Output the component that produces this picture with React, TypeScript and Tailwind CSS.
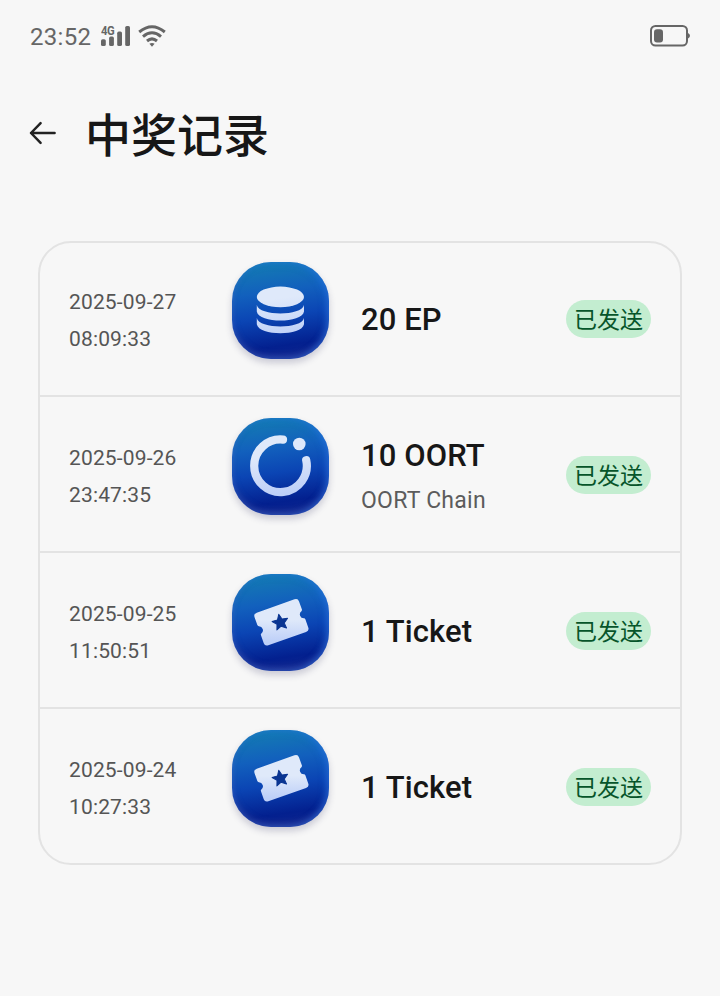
import { ReactNode } from 'react';

type PrizeIcon = 'ep' | 'oort' | 'ticket';

interface WinRecord {
  id: number;
  date: string;
  time: string;
  icon: PrizeIcon;
  prize: string;
  network?: string;
}

const records: WinRecord[] = [
  { id: 1, date: '2025-09-27', time: '08:09:33', icon: 'ep', prize: '20 EP' },
  { id: 2, date: '2025-09-26', time: '23:47:35', icon: 'oort', prize: '10 OORT', network: 'OORT Chain' },
  { id: 3, date: '2025-09-25', time: '11:50:51', icon: 'ticket', prize: '1 Ticket' },
  { id: 4, date: '2025-09-24', time: '10:27:33', icon: 'ticket', prize: '1 Ticket' },
];

function StatusBar() {
  return (
    <div className="flex h-[72px] items-center pl-[30px] pr-[30px] text-[#666666]">
      <span className="w-[70px] pt-[2px] text-[24px] leading-[28px] tracking-[0.3px]">23:52</span>
      {/* Signal */}
      <div className="relative h-[22px] w-[30px]">
        <span className="absolute top-0 left-[0.5px] origin-left scale-x-90 text-[12.5px] font-bold leading-[11px] tracking-[-0.6px]">4G</span>
        <svg className="absolute inset-0" width="30" height="22" viewBox="0 0 30 22" fill="currentColor">
          <rect x="1" y="14.2" width="4.8" height="6.8" rx="1.6" />
          <rect x="9.1" y="11.6" width="4.8" height="9.4" rx="1.6" />
          <rect x="17.2" y="6.6" width="4.8" height="14.4" rx="1.6" />
          <rect x="25.2" y="1" width="4.8" height="20" rx="1.6" />
        </svg>
      </div>
      {/* Wifi */}
      <svg className="ml-[8px]" width="28" height="22" viewBox="0 0 28 22" fill="none" stroke="currentColor" strokeWidth="3">
        <path d="M1.2 7 Q14 -3.4 26.8 7" />
        <path d="M5 11.6 Q14 4 23 11.6" />
        <path d="M9 16 Q14 11.8 19 16" />
        <path d="M11.4 18.8 Q14 17.4 16.6 18.8 L14 21.8 Z" fill="currentColor" stroke="none" />
      </svg>
      {/* Battery */}
      <svg className="ml-auto" width="40" height="22" viewBox="0 0 40 22" fill="none">
        <rect x="1" y="1" width="36" height="19.6" rx="4.5" stroke="currentColor" strokeWidth="2" />
        <rect x="4" y="4.2" width="9" height="13.2" rx="3" fill="currentColor" />
        <path d="M38 8 Q40 9 40 10.8 Q40 12.5 38 13.5 Z" fill="currentColor" />
      </svg>
    </div>
  );
}

const icons: Record<PrizeIcon, ReactNode> = {
  ep: (
    <g fill="url(#glyph)">
      <ellipse cx="48.4" cy="34.9" rx="23.6" ry="10.3" />
      <path d="M24.8 43 C27 54.3 69.8 54.3 72 43 V49.4 C70 61.6 26.8 61.6 24.8 49.4 Z" />
      <path d="M24.8 56 C27 67.3 69.8 67.3 72 56 V62.2 C70 74.2 26.8 74.2 24.8 62.2 Z" />
    </g>
  ),
  oort: (
    <>
      <path
        d="M51 21.6 A26.3 26.3 0 1 0 74.2 42.2"
        fill="none"
        stroke="url(#glyph)"
        strokeWidth="8.2"
        strokeLinecap="round"
      />
      <circle cx="67.3" cy="26" r="6.3" fill="#dde8fb" />
    </>
  ),
  ticket: (
    <g transform="translate(49.4 48.3) rotate(-19.5)">
      <path
        d="M-20 -17.3 H20 Q23.6 -17.3 23.6 -13.8 V-5.4 Q23.6 -4.2 22.6 -3.8 A4 4 0 0 0 22.6 3.8 Q23.6 4.2 23.6 5.4 V13.8 Q23.6 17.3 20 17.3 H-20 Q-23.6 17.3 -23.6 13.8 V5.4 Q-23.6 4.2 -22.6 3.8 A4 4 0 0 0 -22.6 -3.8 Q-23.6 -4.2 -23.6 -5.4 V-13.8 Q-23.6 -17.3 -20 -17.3 Z"
        fill="url(#ticketGlyph)"
      />
      <path
        transform="translate(-1 -0.3) rotate(8)"
        d="M0 -8.2 L2.3 -3 L7.9 -2.5 L3.7 1.3 L4.9 6.8 L0 3.9 L-4.9 6.8 L-3.7 1.3 L-7.9 -2.5 L-2.3 -3 Z"
        fill="#0a3592"
        stroke="#0a3592"
        strokeWidth="1"
        strokeLinejoin="round"
      />
    </g>
  ),
};

function PrizeTile({ icon }: { icon: PrizeIcon }) {
  return (
    <div className="size-[97px] rounded-[39px] bg-linear-[172deg,#147db2_3%,#1260bd_32%,#0b45b4_55%,#03208f_82%,#142890_100%] shadow-[0_4px_7px_rgba(40,40,90,0.22),inset_-3px_1px_7px_rgba(30,120,235,0.5),inset_0_-3px_7px_rgba(100,105,180,0.4)]">
      <svg width="97" height="97" viewBox="0 0 97 97">
        <defs>
          <linearGradient id="glyph" gradientUnits="userSpaceOnUse" x1="42" y1="20" x2="50" y2="76">
            <stop offset="0.3" stopColor="#dfe9fa" />
            <stop offset="1" stopColor="#bdcff8" />
          </linearGradient>
          <linearGradient id="ticketGlyph" gradientUnits="userSpaceOnUse" x1="4" y1="-17" x2="-8" y2="18">
            <stop offset="0.4" stopColor="#dfe9fa" />
            <stop offset="1" stopColor="#bdcff8" />
          </linearGradient>
        </defs>
        {icons[icon]}
      </svg>
    </div>
  );
}

function RecordRow({ record }: { record: WinRecord }) {
  return (
    <div className="flex h-[156px] items-center border-b-2 border-[#e3e3e3] pt-[2px] pl-[29px] pr-[29px] first:h-[154px] first:pt-0 last:h-[154px] last:border-b-0">
      <div className="w-[163px] pt-[4px] text-[21px] leading-[37px] tracking-[0.15px] text-[#555555]">
        <div>{record.date}</div>
        <div>{record.time}</div>
      </div>
      <div className="mb-[18px]">
        <PrizeTile icon={record.icon} />
      </div>
      <div className="ml-[32px] flex-1 pt-[2px]">
        <div className="text-[31px] font-medium leading-[44px] tracking-[0.1px] text-[#171717]">{record.prize}</div>
        {record.network && (
          <div className="-mb-[2px] pt-[3px] text-[23px] leading-[40px] tracking-[0.25px] text-[#5c5c5c]">{record.network}</div>
        )}
      </div>
      <span className="flex h-[38px] w-[85px] items-center justify-center rounded-full bg-[#c3edd0] pt-[2px] text-[23px] leading-none text-[#07552a]">
        已发送
      </span>
    </div>
  );
}

function App() {
  return (
    <div className="h-[996px] w-[720px] overflow-hidden bg-[#f7f7f7] font-[Roboto,'Noto_Sans_CJK_SC',sans-serif]">
      <StatusBar />

      <header className="flex h-[124px] items-center pl-[29px]">
        <svg className="mb-[2px]" width="28" height="24" viewBox="0 0 28 24" fill="none" stroke="#222222" strokeWidth="2.5" strokeLinecap="round" strokeLinejoin="round">
          <path d="M25.6 12 H2 M11.6 2.2 L2 12 L11.6 21.8" />
        </svg>
        <h1 className="ml-[28px] pt-[3px] text-[46px] font-medium leading-none text-[#171717]">中奖记录</h1>
      </header>

      <main className="mx-[38px] mt-[45px] rounded-[33px] border-2 border-[#e3e3e3]">
        {records.map((record) => (
          <RecordRow key={record.id} record={record} />
        ))}
      </main>
    </div>
  );
}

export default App;
